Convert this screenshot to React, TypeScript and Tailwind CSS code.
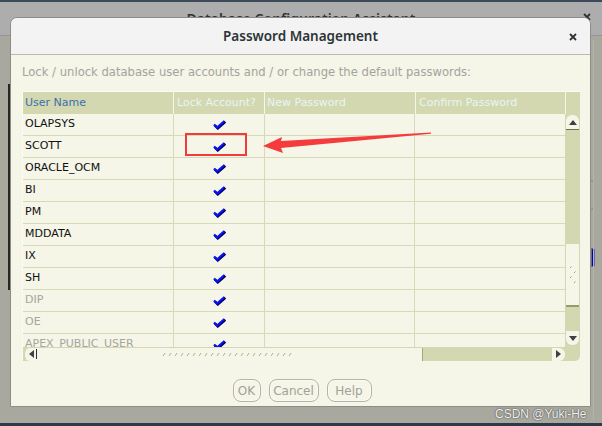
import React from "react";

interface Account {
  name: string;
  dim?: boolean;
}

const ACCOUNTS: Account[] = [
  { name: "OLAPSYS" },
  { name: "SCOTT" },
  { name: "ORACLE_OCM" },
  { name: "BI" },
  { name: "PM" },
  { name: "MDDATA" },
  { name: "IX" },
  { name: "SH" },
  { name: "DIP", dim: true },
  { name: "OE", dim: true },
  { name: "APEX_PUBLIC_USER", dim: true },
];

function Check() {
  return (
    <svg width="15" height="11" viewBox="0 0 15 11">
      <path d="M2 5.5 L5 8.5 L12.5 2" stroke="#000060" strokeWidth="2.6" fill="none" transform="translate(0.8 0.8)" />
      <path d="M2 5.5 L5 8.5 L12.5 2" stroke="#0a14f0" strokeWidth="2.3" fill="none" />
    </svg>
  );
}

function CloseX({ size = 8, stroke = 1.8 }: { size?: number; stroke?: number }) {
  return (
    <svg width={size} height={size} viewBox="0 0 8 8">
      <path d="M1 1 L7 7 M7 1 L1 7" stroke="#2e3436" strokeWidth={stroke} />
    </svg>
  );
}

// little diagonal grip marks drawn on the scroll thumbs
function Grip({ count, vertical }: { count: number; vertical?: boolean }) {
  if (vertical) {
    return (
      <svg width="8" height="20" viewBox="0 0 8 20">
        {[0, 1, 2, 3].map((i) => (
          <path key={i} d={`M${i % 2 ? 5 : 1} ${i * 5 + 3} l1.5 -1.5`} stroke="#8a9060" strokeWidth="0.8" />
        ))}
      </svg>
    );
  }
  return (
    <svg width={count * 6} height="6" viewBox={`0 0 ${count * 6} 6`}>
      {Array.from({ length: count }).map((_, i) => (
        <path key={i} d={`M${i * 6 + 1} 5 l2 -3`} stroke="#9aa070" strokeWidth="0.8" />
      ))}
    </svg>
  );
}

function AccountsTable() {
  return (
    <div className="w-[558px] h-[269px] flex flex-col border-t border-l border-[#fbfbf2] text-[11px]">
      {/* Header */}
      <div className="flex h-[22px] shrink-0 bg-[#d3d8b0]">
        <div className="w-[151px] pl-[2px] flex items-center text-[#3c6fae] border-r border-[#f5f5e8]">User Name</div>
        <div className="w-[91px] pl-[3px] flex items-center text-[#e6f6f4] border-r border-[#f5f5e8]">Lock Account?</div>
        <div className="w-[151px] pl-[2px] flex items-center text-[#e6f6f4] border-r border-[#f5f5e8]">New Password</div>
        <div className="w-[150px] pl-[3px] flex items-center text-[#e6f6f4] border-r border-[#f5f5e8]">Confirm Password</div>
        <div className="w-[14px]" />
      </div>

      {/* Body + vertical scrollbar */}
      <div className="flex h-[233px] shrink-0">
        <div className="w-[543px] h-full overflow-hidden bg-[#f5f5e8]">
          {ACCOUNTS.map((a) => (
            <div key={a.name} className="flex h-[22px] shrink-0 border-b border-[#d6dab8]">
              <div className={`w-[151px] pl-[2px] flex items-center border-r border-[#d6dab8] ${a.dim ? "text-[#a6a69e]" : "text-[#111]"}`}>
                {a.name}
              </div>
              <div className="w-[91px] flex items-center justify-center border-r border-[#d6dab8] pl-[2px]">
                <Check />
              </div>
              <div className="w-[151px] border-r border-[#d6dab8]" />
              <div className="w-[150px]" />
            </div>
          ))}
        </div>
        <div className="w-[15px] h-full bg-[#d3d8b0] flex flex-col items-center">
          <div className="w-[13px] h-[15px] mt-[1px] bg-[#f5f5e8] rounded-t-[6px] border-b border-[#6e6e60] flex items-center justify-center">
            <span className="w-0 h-0 border-l-[4px] border-r-[4px] border-b-[5px] border-l-transparent border-r-transparent border-b-[#404040]" />
          </div>
          <div className="w-[13px] h-[63px] mt-[114px] bg-[#f5f5e8] border-b-2 border-[#9a9a70] flex items-center justify-center">
            <Grip count={4} vertical />
          </div>
          <div className="w-[13px] h-[14px] mt-[24px] bg-[#f5f5e8] rounded-b-[6px] flex items-center justify-center">
            <span className="w-0 h-0 border-l-[4px] border-r-[4px] border-t-[5px] border-l-transparent border-r-transparent border-t-[#404040]" />
          </div>
        </div>
      </div>

      {/* Horizontal scrollbar */}
      <div className="flex h-[14px] shrink-0">
        <div className="w-[543px] h-full bg-[#d3d8b0] flex items-center">
          <div className="w-[400px] h-[13px] bg-[#f5f5e8] rounded-l-[6px] border-l-2 border-[#d3d8b0] border-r border-r-[#a6a67c] flex items-center">
            <span className="ml-[4px] w-0 h-0 border-t-[4px] border-b-[4px] border-r-[5px] border-t-transparent border-b-transparent border-r-[#404040]" />
            <span className="ml-[2px] w-[1px] h-[10px] bg-[#303030]" />
            <div className="ml-[125px]">
              <Grip count={22} />
            </div>
          </div>
          <div className="flex-1" />
          <div className="w-[13px] h-[13px] bg-[#f5f5e8] rounded-r-[6px] flex items-center justify-center">
            <span className="w-0 h-0 border-t-[4px] border-b-[4px] border-l-[5px] border-t-transparent border-b-transparent border-l-[#404040]" />
          </div>
        </div>
        <div className="w-[15px] h-full bg-[#d3d8b0] rounded-br-[5px]" />
      </div>
    </div>
  );
}

function DialogButton({ label, width }: { label: string; width: string }) {
  return (
    <button className={`${width} h-[23px] rounded-[8px] border border-[#b4b4a8] bg-[#f5f5e8] text-[#a2a298] text-[12px] flex items-center justify-center shadow-[inset_0_0_0_1px_#fbfbf4]`}>
      {label}
    </button>
  );
}

export default function App() {
  return (
    <div className="relative w-[602px] h-[426px] overflow-hidden bg-[#a8a89e] font-['DejaVu_Sans',sans-serif]">
      {/* parent window title bar */}
      <div className="h-[2px] bg-[#3b4a58]" />
      <div className="relative h-[34px] bg-[#adadad] border-b border-[#949494] flex justify-center">
        <span className="mt-[6px] text-[14px] font-semibold text-[#2e3436] font-['Noto_Sans',sans-serif]">
          Database Configuration Assistant
        </span>
        <div className="absolute left-[583px] top-[11px]">
          <CloseX />
        </div>
      </div>

      {/* bits of the parent window peeking out */}
      <div className="absolute left-[8px] top-[84px] w-[2px] h-[206px] bg-[#262626]" />
      <div className="absolute left-[590px] top-[180px] w-[4px] h-[30px] rounded-r-[3px] border border-[#8a8a80]" />
      <div className="absolute left-[591px] top-[248px] w-[4px] h-[19px] rounded-r-[2px] bg-[#0000c0] border border-[#6a6a90]" />
      <div className="absolute left-[593px] top-[40px] w-[1px] h-[380px] bg-[#b4b4aa]" />

      {/* Password Management dialog */}
      <div className="absolute left-[10px] top-[17px] w-[581px] h-[390px] rounded-t-[7px] border border-[#8d8d88] bg-[#f5f5e8] flex flex-col">
        <div className="relative h-[37px] shrink-0 rounded-t-[7px] bg-[#f3f3f3] border-b border-[#b9b9b6] flex items-center justify-center">
          <span className="text-[13.5px] font-semibold text-[#2e3436] font-['Noto_Sans',sans-serif]">Password Management</span>
          <div className="absolute right-[13px] top-[15px]">
            <CloseX />
          </div>
        </div>

        <div className="flex flex-col px-[11px]">
          <div className="h-[36px] flex items-center pb-[1px] text-[11.6px] text-[#a4a49c]">
            Lock / unlock database user accounts and / or change the default passwords:
          </div>
          <AccountsTable />
          <div className="mt-[19px] flex justify-center gap-[8px] pl-[3px]">
            <DialogButton label="OK" width="w-[28px]" />
            <DialogButton label="Cancel" width="w-[50px]" />
            <DialogButton label="Help" width="w-[45px]" />
          </div>
        </div>
      </div>

      {/* annotation: red box + arrow */}
      <div className="absolute left-[185px] top-[133px] w-[62px] h-[23px] border-2 border-[#f03c3c]" />
      <svg className="absolute left-0 top-0" width="602" height="426" viewBox="0 0 602 426">
        <polygon
          points="263,146 282,137 281,141 431,132.5 431,133.8 281,148 283,153"
          fill="#f43c3c"
        />
      </svg>

      {/* watermark */}
      <div className="absolute left-[495px] top-[405px] text-[12px] text-[#f2f2f2] font-['Liberation_Sans',sans-serif] [text-shadow:0_0_2px_#555,0_0_1px_#444]">
        CSDN @Yuki-He
      </div>

      <div className="absolute left-0 bottom-0 w-full h-[3px] bg-[#2e3a48]" />
    </div>
  );
}
